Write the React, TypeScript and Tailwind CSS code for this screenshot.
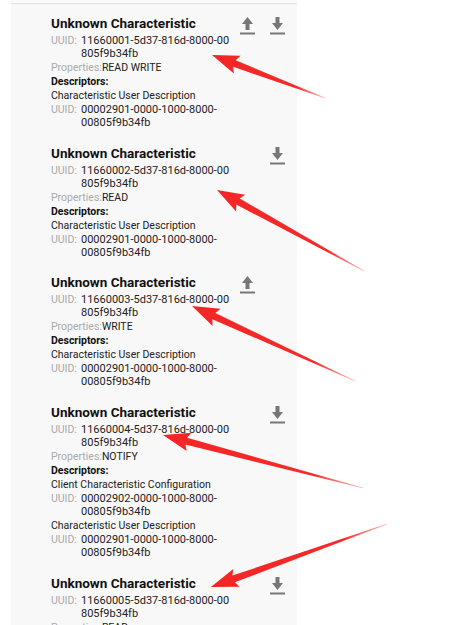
import React from "react";

type Desc = { name: string; uuid: [string, string] };
type Char = { uuid: [string, string]; props: string; up: boolean; down: boolean; descs: Desc[] };

const CUD: Desc = { name: "Characteristic User Description", uuid: ["00002901-0000-1000-8000-", "00805f9b34fb"] };
const CCC: Desc = { name: "Client Characteristic Configuration", uuid: ["00002902-0000-1000-8000-", "00805f9b34fb"] };

const chars: Char[] = [
  { uuid: ["11660001-5d37-816d-8000-00", "805f9b34fb"], props: "READ WRITE", up: true, down: true, descs: [CUD] },
  { uuid: ["11660002-5d37-816d-8000-00", "805f9b34fb"], props: "READ", up: false, down: true, descs: [CUD] },
  { uuid: ["11660003-5d37-816d-8000-00", "805f9b34fb"], props: "WRITE", up: true, down: false, descs: [CUD] },
  { uuid: ["11660004-5d37-816d-8000-00", "805f9b34fb"], props: "NOTIFY", up: false, down: true, descs: [CCC, CUD] },
  { uuid: ["11660005-5d37-816d-8000-00", "805f9b34fb"], props: "READ", up: false, down: true, descs: [CUD] },
];

// red annotation arrows: [tailX, tailY, tipX, tipY]
const arrows: [number, number, number, number][] = [
  [325, 98, 212, 55],
  [364, 271, 217, 190],
  [355, 381, 192, 306],
  [363, 488, 163, 435],
  [387, 524, 211, 587],
];

function arrowPoints(tx: number, ty: number, px: number, py: number) {
  const dx = px - tx;
  const dy = py - ty;
  const len = Math.hypot(dx, dy);
  const ux = dx / len;
  const uy = dy / len;
  const nx = -uy;
  const ny = ux;
  const headLen = 24;
  const bx = px - ux * headLen;
  const by = py - uy * headLen;
  const pts = [
    [tx + nx * 0.3, ty + ny * 0.3],
    [bx + nx * 3.5, by + ny * 3.5],
    [bx - ux * 3 + nx * 9.5, by - uy * 3 + ny * 9.5],
    [px, py],
    [bx - ux * 3 - nx * 9.5, by - uy * 3 - ny * 9.5],
    [bx - nx * 3.5, by - ny * 3.5],
    [tx - nx * 0.3, ty - ny * 0.3],
  ];
  return pts.map((p) => p[0].toFixed(1) + "," + p[1].toFixed(1)).join(" ");
}

function UpIcon() {
  return (
    <svg width="15" height="19" viewBox="0 0 15 19" fill="#777777">
      <polygon points="7.5,1 13,8 9.5,8 9.5,14 5.5,14 5.5,8 2,8" />
      <rect x="0" y="16.5" width="15" height="2" />
    </svg>
  );
}

function DownIcon() {
  return (
    <svg width="15" height="19" viewBox="0 0 15 19" fill="#777777">
      <polygon points="5.5,1 9.5,1 9.5,7 13,7 7.5,14 2,7 5.5,7" />
      <rect x="0" y="16.5" width="15" height="2" />
    </svg>
  );
}

function UuidRow({ value }: { value: [string, string] }) {
  return (
    <div className="flex">
      <span className="w-[30px] shrink-0 text-[10.5px] leading-[13px] text-[#aaaaaa]">UUID:</span>
      <div className="flex flex-col text-[11px] leading-[13px] text-[#222]">
        <span>{value[0]}</span>
        <span>{value[1]}</span>
      </div>
    </div>
  );
}

function CharCard({ c }: { c: Char }) {
  return (
    <div className="flex pl-[40px] pr-[12px]">
      <div className="flex flex-1 flex-col gap-[1px] text-[10.5px]">
        <div className="mb-[1px] text-[13.5px] font-bold leading-[18px] text-[#111]">Unknown Characteristic</div>
        <UuidRow value={c.uuid} />
        <div className="leading-[13px]">
          <span className="text-[#aaaaaa]">Properties:</span>
          <span className="text-[#222]">{c.props}</span>
        </div>
        <div className="font-bold leading-[13px] text-[#111]">Descriptors:</div>
        {c.descs.map((d) => (
          <div key={d.name} className="flex flex-col gap-[1px]">
            <div className="leading-[13px] text-[#222]">{d.name}</div>
            <UuidRow value={d.uuid} />
          </div>
        ))}
      </div>
      <div className="flex gap-[15px] pt-[2px]">
        <div className="w-[15px]">{c.up && <UpIcon />}</div>
        <div className="w-[15px]">{c.down && <DownIcon />}</div>
      </div>
    </div>
  );
}

export default function App() {
  return (
    <div className="relative h-[625px] w-[451px] overflow-hidden bg-white font-['Roboto',sans-serif]">
      <div className="ml-[11px] h-full w-[286px] bg-[#f8f8f8]">
        <div className="h-[3px] bg-[#fafafa]" />
        <div className="h-[1px] bg-[#e3e3e3]" />
        <div className="flex flex-col gap-[14.7px] pt-[10px]">
          {chars.map((c) => (
            <CharCard key={c.uuid[0]} c={c} />
          ))}
        </div>
      </div>

      {/* annotation arrows */}
      <svg className="pointer-events-none absolute left-0 top-0" width="451" height="625">
        <defs>
          {arrows.map((a, i) => (
            <linearGradient key={i} id={"ag" + i} gradientUnits="userSpaceOnUse" x1={a[0]} y1={a[1]} x2={a[2]} y2={a[3]}>
              <stop offset="0" stopColor="#ff6a6a" stopOpacity="0.6" />
              <stop offset="0.25" stopColor="#f52a2a" />
              <stop offset="1" stopColor="#f52525" />
            </linearGradient>
          ))}
        </defs>
        {arrows.map((a, i) => (
          <polygon key={i} points={arrowPoints(a[0], a[1], a[2], a[3])} fill={"url(#ag" + i + ")"} />
        ))}
      </svg>
    </div>
  );
}
